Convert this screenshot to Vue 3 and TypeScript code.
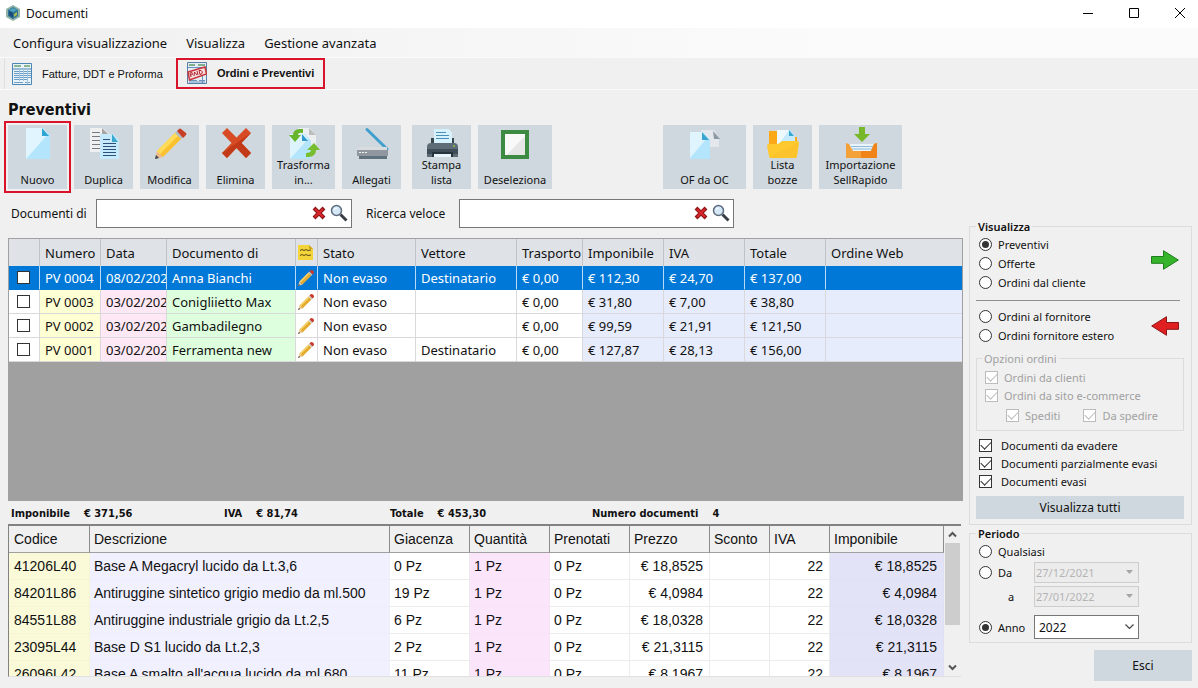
<script setup lang="ts">
import { ref } from 'vue'

type Action = { icon: string; label: string; size: string; marked?: boolean }

const groups: Action[][] = [
  [
    { icon: 'new', label: 'Nuovo', size: 'w-s', marked: true },
    { icon: 'copy', label: 'Duplica', size: 'w-s' },
    { icon: 'edit', label: 'Modifica', size: 'w-s' },
    { icon: 'delete', label: 'Elimina', size: 'w-s' },
    { icon: 'transform', label: 'Trasforma in...', size: 'w-m' },
    { icon: 'scan', label: 'Allegati', size: 'w-s' },
  ],
  [
    { icon: 'print', label: 'Stampa lista', size: 'w-s' },
    { icon: 'deselect', label: 'Deseleziona', size: 'w-l' },
  ],
  [
    { icon: 'convert', label: 'OF da OC', size: 'w-xl' },
    { icon: 'drafts', label: 'Lista bozze', size: 'w-s' },
    { icon: 'import', label: 'Importazione SellRapido', size: 'w-xl' },
  ],
]

const docCols = [31, 61, 66, 129, 22, 98, 101, 66, 81, 81, 81]
const docs = [
  { num: 'PV 0004', date: '08/02/2022', name: 'Anna Bianchi', carrier: 'Destinatario', net: '€ 112,30', vat: '€ 24,70', total: '€ 137,00' },
  { num: 'PV 0003', date: '03/02/2022', name: 'Conigliietto Max', carrier: '', net: '€ 31,80', vat: '€ 7,00', total: '€ 38,80' },
  { num: 'PV 0002', date: '03/02/2022', name: 'Gambadilegno', carrier: '', net: '€ 99,59', vat: '€ 21,91', total: '€ 121,50' },
  { num: 'PV 0001', date: '03/02/2022', name: 'Ferramenta new', carrier: 'Destinatario', net: '€ 127,87', vat: '€ 28,13', total: '€ 156,00' },
]

const itemCols = [81, 300, 80, 80, 80, 80, 60, 60]
const itemHeads = ['Codice', 'Descrizione', 'Giacenza', 'Quantità', 'Prenotati', 'Prezzo', 'Sconto', 'IVA', 'Imponibile']
const items = [
  ['41206L40', 'Base A Megacryl lucido da Lt.3,6', '0 Pz', '1 Pz', '0 Pz', '€ 18,8525', '', '22', '€ 18,8525'],
  ['84201L86', 'Antiruggine sintetico grigio medio da ml.500', '19 Pz', '1 Pz', '0 Pz', '€ 4,0984', '', '22', '€ 4,0984'],
  ['84551L88', 'Antiruggine industriale grigio da Lt.2,5', '6 Pz', '1 Pz', '0 Pz', '€ 18,0328', '', '22', '€ 18,0328'],
  ['23095L44', 'Base D S1 lucido da Lt.2,3', '2 Pz', '1 Pz', '0 Pz', '€ 21,3115', '', '22', '€ 21,3115'],
  ['26096L42', "Base A smalto all'acqua lucido da ml.680", '11 Pz', '1 Pz', '0 Pz', '€ 8,1967', '', '22', '€ 8,1967'],
]

const searches = [
  { id: 'customer', label: 'Documenti di', cls: 'search-a' },
  { id: 'quick', label: 'Ricerca veloce', cls: 'search-b' },
]
const query = ref<Record<string, string>>({ customer: '', quick: '' })
const totals = [
  ['Imponibile', '€ 371,56'],
  ['IVA', '€ 81,74'],
  ['Totale', '€ 453,30'],
  ['Numero documenti', '4'],
]
const selected = ref(0)
const view = ref('Preventivi')
const period = ref('Anno')
const states = ref(['Documenti da evadere', 'Documenti parzialmente evasi', 'Documenti evasi'])
</script>

<template>
  <div class="window">
    <header class="titlebar">
      <svg class="app-icon" viewBox="0 0 14 16">
        <path d="M7 0l7 4v8l-7 4-7-4V4z" fill="#8fb3a8" />
        <path d="M7 2l5 3v6l-5 3-5-3V5z" fill="#2f7396" />
        <path d="M3 5l4-2 4 2-4 2z" fill="#4fa3bf" />
        <path d="M3 6l4 2v5l-4-3z" fill="#1d4a78" />
        <path d="M8 9l3-2v3l-3 2z" fill="#a8b84a" />
      </svg>
      <span class="title">Documenti</span>
      <button class="win-btn" aria-label="Riduci"><svg viewBox="0 0 12 12"><path d="M1 6.500h10" /></svg></button>
      <button class="win-btn" aria-label="Ingrandisci"><svg viewBox="0 0 12 12"><path d="M1.500 1.500h9v9h-9z" /></svg></button>
      <button class="win-btn" aria-label="Chiudi"><svg viewBox="0 0 12 12"><path d="M1 1l10 10M11 1L1 11" /></svg></button>
    </header>

    <nav class="menubar">
      <button>Configura visualizzazione</button>
      <button>Visualizza</button>
      <button>Gestione avanzata</button>
    </nav>

    <nav class="tabs">
      <button class="tab">
        <svg class="tab-icon" viewBox="0 0 20 22">
          <path d="M.5.5h19v21H.5z" fill="#eaf3fa" stroke="#4b86b4" />
          <path d="M2 3h7M12 3h6" stroke="#6ba56b" stroke-width="1.500" />
          <path d="M1 6h18" stroke="#4b86b4" />
          <path d="M2 8.500h5M2 10.500h5M2 12.500h5M2 14.500h5M2 16.500h5M8 8.500h3M8 10.500h3M8 12.500h3M8 14.500h3M8 16.500h3M12 8.500h3M12 10.500h3M12 12.500h3M12 14.500h3M12 16.500h3M16 8.500h3M16 10.500h3M16 12.500h3M16 14.500h3M2 19.500h9M13 19.500h5" stroke="#6d9fc6" />
          <path d="M7.500 6v12M11.500 6v12M15.500 6v15" stroke="#a3c5df" />
        </svg>
        <span>Fatture, DDT e Proforma</span>
      </button>
      <button class="tab active">
        <svg class="tab-icon" viewBox="0 0 20 22">
          <path d="M.5.5h19v21H.5z" fill="#e4edf6" stroke="#5a7fa6" />
          <path d="M2 3h6M11 3h7" stroke="#5f9a66" stroke-width="1.500" />
          <path d="M1 5.500h18M2 18.500h8M12 18.500h6M15.500 14v7M2 20h16" stroke="#6d93bd" />
          <path d="M1 10l17-5 1.500 7-17 6z" fill="#f6dcdc" stroke="#c8353b" stroke-width="1.500" />
          <path d="M4 15l-1-4 2-.5.5 2-2 .5M7 14l.5-4 2.500 3M11 13l-1-4M13 12.500l-1-4 2 0 1.500 1.500-1 2z" fill="none" stroke="#b52930" stroke-width="1" />
        </svg>
        <span>Ordini e Preventivi</span>
      </button>
    </nav>

    <div class="body">
      <main class="main">
        <h1>Preventivi</h1>

        <div class="toolbar">
          <div v-for="(group, gi) in groups" :key="gi" class="tool-group">
            <button v-for="a in group" :key="a.icon" class="tool" :class="[a.size, { marked: a.marked }]">
              <svg class="tool-icon" viewBox="0 0 32 30">
                <g v-if="a.icon === 'new'">
                  <path d="M4 1h17l7 7v24H4z" fill="#b3e5fc" />
                  <path d="M4 1h17l5 6L4 32z" fill="#e1f5fe" />
                  <path d="M20 1l7 8h-7z" fill="#2fa5d2" />
                </g>
                <g v-else-if="a.icon === 'copy'">
                  <path d="M2 1h13l6 6v18H2z" fill="#f0f0f0" />
                  <path d="M14 1l6 6h-6z" fill="#a5a5a5" />
                  <path d="M4 5.500h8M4 9.500h8M4 13.500h8M4 17.500h8M4 21.500h8" stroke="#757b85" />
                  <path d="M12 7h13l6 6v19H12z" fill="#c4eafb" />
                  <path d="M24 7l6 8h-6z" fill="#3ba9cf" />
                  <path d="M15 12.500h7M15 16.500h13M15 19.500h13M15 22.500h13M15 25.500h13M15 28.500h13" stroke="#2b5079" />
                </g>
                <g v-else-if="a.icon === 'edit'">
                  <path d="M1 32l2-8 6 6z" fill="#efb98a" />
                  <path d="M1 32l1-4 3 3z" fill="#37474f" />
                  <path d="M3 24L22 5l6 6L9 30z" fill="#fbc02d" />
                  <path d="M3 24L22 5l3 3L6 27z" fill="#ffdb57" />
                  <path d="M21 6l2-2 6 6-2 2z" fill="#b0bec5" />
                  <path d="M23 4l2-2q1-1 2 0l5 4q1 1 0 2l-3 3z" fill="#c63e25" />
                </g>
                <g v-else-if="a.icon === 'delete'">
                  <path d="M7 1l9.500 9.500L26 1l5 5-9.500 10L31 26l-5 5-9.500-10L7 31l-5-5 9.500-10L2 6z" fill="#d84a23" />
                  <path d="M31 6l-9.500 10L31 26l-5 5-9.500-10L7 31l-5-5z" fill="#c23a17" />
                </g>
                <g v-else-if="a.icon === 'transform'">
                  <path d="M10 1h12l6 7v14H10z" fill="#eceff1" />
                  <path d="M21 1l7 7h-7z" fill="#bdbdbd" />
                  <path d="M2 7h15l6 7v18H2z" fill="#b3e5fc" />
                  <path d="M2 7h14l4 5L2 32z" fill="#def4fd" />
                  <path d="M14 7l6 7h-6z" fill="#3199ce" />
                  <path d="M15 2H11Q5 3 5 8H1l6 7 6-7H10Q10 5 15 6z" fill="#66b52d" />
                  <path d="M18 30h3q7-1 7-7h4l-6-7-7 7h4q0 3-5 3z" fill="#77bd2f" />
                </g>
                <g v-else-if="a.icon === 'scan'">
                  <path d="M11 2.500L31 22" stroke="#419fce" stroke-width="3" stroke-linecap="round" />
                  <path d="M3 20h28v3H1z" fill="#d8dcdf" />
                  <path d="M1 23h31v6H1z" fill="#90979e" />
                  <path d="M3 25.500h2M6 25.500h2M9 25.500h2" stroke="#f2f5f7" />
                  <path d="M3 29h28v3H3z" fill="#60727d" />
                </g>
                <g v-else-if="a.icon === 'print'">
                  <path d="M5 11h23v9H5z" fill="#37474f" />
                  <path d="M8 2h15l3 4v13H8z" fill="#d8f2fd" />
                  <path d="M10 5.500h10M10 8.500h13M10 11.500h13" stroke="#4a8fb8" />
                  <path d="M1 20q0-4 4-4h23q4 0 4 4v10H1z" fill="#5d6c76" />
                  <path d="M1 22h31v5H1z" fill="#3e4d57" />
                  <circle cx="28" cy="19" r="1" fill="#8bc34a" />
                  <path d="M6 25h21v5H6z" fill="#26343d" />
                  <path d="M8 27h17v3H8z" fill="#e8f5fc" />
                </g>
                <g v-else-if="a.icon === 'deselect'">
                  <path d="M4 5h24v25H4z" fill="#f8f8f8" />
                  <path d="M28 7v23H6z" fill="#e6e6e6" />
                  <path d="M4 5h24v25H4z" fill="none" stroke="#3d8b43" stroke-width="4" />
                </g>
                <g v-else-if="a.icon === 'convert'">
                  <path d="M12 3h13l5 8v9H12z" fill="#e4e8ec" />
                  <path d="M24 4l7 8h-6z" fill="#8c9aa3" />
                  <path d="M1 5h13l7 8v19H1z" fill="#b3e5fc" />
                  <path d="M1 5h13l4 6L1 31z" fill="#dff4fd" />
                  <path d="M13 5l7 8h-7z" fill="#39a5d0" />
                </g>
                <g v-else-if="a.icon === 'drafts'">
                  <path d="M2 4h8v6h20v16H2z" fill="#fba919" />
                  <path d="M10 3h13l5 6v16H10z" fill="#c5ebfc" />
                  <path d="M10 3h12L10 20z" fill="#edf9fe" />
                  <path d="M22 3l5 6h-5z" fill="#3aa7d1" />
                  <path d="M0 19q0-2 2-2h9l4-3h15q2 0 2 2l-2 13q0 2-2 2H4q-2 0-2-2z" fill="#fdc92e" />
                  <path d="M2 30L31 16l-1 13q0 2-2 2H4z" fill="#fbbd27" opacity=".5" />
                </g>
                <g v-else>
                  <path d="M14 0h6v7h5l-8 8-8-8h5z" fill="#76b82a" />
                  <path d="M5 17h24v7H5z" fill="#e9f3f9" />
                  <path d="M6 19.500h22M7 22h20" stroke="#8fbcd8" />
                  <path d="M1 16l3 1 4 7h18l3-7 3-1v15H1z" fill="#f5a13a" />
                  <path d="M16 24h10l3-7 3-1v15H16z" fill="#f08419" />
                </g>
              </svg>
              <span class="tool-label">{{ a.label }}</span>
            </button>
          </div>
        </div>

        <div class="search-row">
          <div v-for="s in searches" :key="s.id" class="search" :class="s.cls">
            <label :for="s.id">{{ s.label }}</label>
            <div class="search-box">
              <input :id="s.id" v-model="query[s.id]" type="text" />
              <button aria-label="Cancella" @click="query[s.id] = ''">
                <svg class="clear" viewBox="0 0 14 14">
                  <path d="M2 2l10 10M12 2L2 12" stroke="#8d1518" stroke-width="4" />
                  <path d="M3 3l8 8M11 3l-8 8" stroke="#d8262a" stroke-width="2" />
                </svg>
              </button>
              <button aria-label="Cerca">
                <svg class="lens" viewBox="0 0 18 18">
                  <path d="M10.500 10.500l6 6" stroke="#3a3f47" stroke-width="3" />
                  <circle cx="6.500" cy="6.500" r="5" fill="#d4e8f8" stroke="#5c6b7c" stroke-width="1.500" />
                  <path d="M4 6q0-2 3-2" fill="none" stroke="#fff" />
                </svg>
              </button>
            </div>
          </div>
        </div>

        <div class="doc-grid">
          <table>
            <colgroup>
              <col v-for="(w, i) in docCols" :key="i" :style="{ width: w + 'px' }" />
              <col />
            </colgroup>
            <thead>
              <tr>
                <th></th>
                <th>Numero</th>
                <th>Data</th>
                <th>Documento di</th>
                <th class="icon-cell">
                  <svg class="note" viewBox="0 0 15 15">
                    <path d="M0 0h11l4 4v11H0z" fill="#f3d53b" />
                    <path d="M11 0l4 4h-4z" fill="#c9a51d" />
                    <path d="M2 5.500l2-1 2 1 2-1 2 1 3-.5M2 10.500l2-1 2 1 2-1 2 1 3-.5" fill="none" stroke="#5d4c12" />
                  </svg>
                </th>
                <th>Stato</th>
                <th>Vettore</th>
                <th>Trasporto</th>
                <th>Imponibile</th>
                <th>IVA</th>
                <th>Totale</th>
                <th>Ordine Web</th>
              </tr>
            </thead>
            <tbody>
              <tr v-for="(d, i) in docs" :key="d.num" :class="{ selected: selected === i }" @click="selected = i">
                <td class="check-cell"><input type="checkbox" :aria-label="d.num" /></td>
                <td class="yellow">{{ d.num }}</td>
                <td class="pink">{{ d.date }}</td>
                <td class="green">{{ d.name }}</td>
                <td class="icon-cell">
                  <svg class="pencil" viewBox="0 0 16 16">
                    <path d="M0 16l1.500-4.500 3 3z" fill="#e8c9a0" />
                    <path d="M0 16l1-2 1 1z" fill="#333" />
                    <path d="M1.500 11.500l9-9 3 3-9 9z" fill="#e3ab2f" />
                    <path d="M1.500 11.500l9-9 1 1-9 9z" fill="#f8d873" />
                    <path d="M10.500 2.500l1-1 3 3-1 1z" fill="#c5ccd2" />
                    <path d="M11.500 1.500L13 0q3 0 3 3l-1.500 1.500z" fill="#c8392b" />
                  </svg>
                </td>
                <td>Non evaso</td>
                <td>{{ d.carrier }}</td>
                <td>€ 0,00</td>
                <td class="blue">{{ d.net }}</td>
                <td class="blue">{{ d.vat }}</td>
                <td class="blue">{{ d.total }}</td>
                <td class="blue"></td>
              </tr>
            </tbody>
          </table>
        </div>

        <dl class="totals">
          <div v-for="t in totals" :key="t[0]">
            <dt>{{ t[0] }}</dt>
            <dd>{{ t[1] }}</dd>
          </div>
        </dl>

        <div class="item-grid">
          <div class="item-view">
            <table>
              <colgroup>
                <col v-for="(w, i) in itemCols" :key="i" :style="{ width: w + 'px' }" />
                <col />
              </colgroup>
              <thead>
                <tr><th v-for="h in itemHeads" :key="h">{{ h }}</th></tr>
              </thead>
              <tbody>
                <tr v-for="row in items" :key="row[0]">
                  <td v-for="(c, i) in row" :key="i">{{ c }}</td>
                </tr>
              </tbody>
            </table>
          </div>
          <div class="scrollbar">
            <button aria-label="Su"><svg viewBox="0 0 9 7"><path d="M1 5.500L4.500 2 8 5.500" /></svg></button>
            <div class="track"><div class="thumb"></div></div>
            <button aria-label="Giù"><svg viewBox="0 0 9 7"><path d="M1 1.500L4.500 5 8 1.500" /></svg></button>
          </div>
        </div>
      </main>

      <aside class="side">
        <fieldset class="view-box">
          <legend>Visualizza</legend>
          <div class="split">
            <div class="choices">
              <label v-for="o in ['Preventivi', 'Offerte', 'Ordini dal cliente']" :key="o">
                <input v-model="view" type="radio" name="view" :value="o" />{{ o }}
              </label>
            </div>
            <svg class="arrow up" viewBox="0 0 28 20"><path d="M.5 6.500h12V.7L27.300 10 12.500 19.300v-6H.5z" fill="#36b52c" stroke="#1d7d1a" /></svg>
          </div>
          <hr />
          <div class="split">
            <div class="choices">
              <label v-for="o in ['Ordini al fornitore', 'Ordini fornitore estero']" :key="o">
                <input v-model="view" type="radio" name="view" :value="o" />{{ o }}
              </label>
            </div>
            <svg class="arrow" viewBox="0 0 28 20"><path d="M27.500 6.500h-12V.7L.7 10l14.800 9.300v-6h12z" fill="#e02020" stroke="#8c1515" /></svg>
          </div>
          <fieldset class="options" disabled>
            <legend>Opzioni ordini</legend>
            <label><input type="checkbox" checked />Ordini da clienti</label>
            <label><input type="checkbox" checked />Ordini da sito e-commerce</label>
            <div class="sub">
              <label><input type="checkbox" checked />Spediti</label>
              <label><input type="checkbox" checked />Da spedire</label>
            </div>
          </fieldset>
          <div class="states">
            <label v-for="o in ['Documenti da evadere', 'Documenti parzialmente evasi', 'Documenti evasi']" :key="o">
              <input v-model="states" type="checkbox" :value="o" />{{ o }}
            </label>
          </div>
          <button class="flat show-all">Visualizza tutti</button>
        </fieldset>

        <fieldset class="period-box">
          <legend>Periodo</legend>
          <div class="period-row first">
            <label><input v-model="period" type="radio" name="period" value="Qualsiasi" />Qualsiasi</label>
          </div>
          <div class="period-row">
            <label><input v-model="period" type="radio" name="period" value="Da" />Da</label>
            <div class="combo off">
              <select disabled aria-label="Da data"><option>27/12/2021</option></select>
              <svg viewBox="0 0 7 4"><path d="M0 0h7L3.500 4z" fill="#a5a5a5" /></svg>
            </div>
          </div>
          <div class="period-row">
            <label for="to-date" class="to">a</label>
            <div class="combo off">
              <select id="to-date" disabled><option>27/01/2022</option></select>
              <svg viewBox="0 0 7 4"><path d="M0 0h7L3.500 4z" fill="#a5a5a5" /></svg>
            </div>
          </div>
          <div class="period-row last">
            <label><input v-model="period" type="radio" name="period" value="Anno" />Anno</label>
            <div class="combo year">
              <select aria-label="Anno scelto"><option>2022</option></select>
              <svg viewBox="0 0 9 6"><path d="M.5.5l4 4 4-4" fill="none" stroke="#444" stroke-width="1.200" /></svg>
            </div>
          </div>
        </fieldset>

        <button class="flat exit">Esci</button>
      </aside>
    </div>
  </div>
</template>

<style>
body {
  background: #f0f0f0;
}
</style>

<style scoped>
* {
  box-sizing: border-box;
}
.window {
  display: flex;
  flex-direction: column;
  height: 100vh;
  min-height: 640px;
  font-family: "Noto Sans", "Open Sans", sans-serif;
  font-size: 11px;
  color: #111;
  background: #f0f0f0;
}
button,
input,
select {
  margin: 0;
  padding: 0;
  border: 0;
  font: inherit;
  color: inherit;
  background: none;
  appearance: none;
}
svg {
  display: block;
  flex: none;
}
.titlebar {
  display: flex;
  align-items: center;
  height: 28px;
  flex: none;
  padding: 0 0 2px 6px;
  font-size: 12px;
  background: #fff;
}
.app-icon {
  width: 14px;
  height: 16px;
}
.title {
  flex: 1;
  margin-left: 6px;
}
.win-btn {
  display: grid;
  align-items: center;
  justify-items: end;
  width: 46px;
  height: 26px;
  padding-right: 12px;
}
.win-btn svg {
  width: 12px;
  height: 12px;
  fill: none;
  stroke: #000;
}
.menubar {
  display: flex;
  align-items: center;
  gap: 19px;
  height: 30px;
  flex: none;
  padding-left: 13px;
  border-bottom: 1px solid #fafafa;
  font-size: 13px;
  background: linear-gradient(90deg, #f0f0f0, #fbfbfb 70%);
}
.tabs {
  display: flex;
  height: 32px;
  flex: none;
  padding-left: 4px;
  border-bottom: 1px solid #fafafa;
}
.tab {
  display: flex;
  align-items: center;
  gap: 10px;
  width: 172px;
  padding-left: 7px;
  border-left: 1px solid #dedede;
  font-family: "Liberation Sans", Arial, sans-serif;
  font-size: 11px;
  white-space: nowrap;
}
.tab-icon {
  width: 20px;
  height: 22px;
}
.tab.active {
  width: 149px;
  height: 31px;
  border: 2px solid #d9142a;
  padding: 0 0 2px 9px;
  font-weight: bold;
}
.body {
  display: flex;
  flex: 1;
  min-height: 0;
  gap: 6px;
  padding: 0 6px 7px 8px;
}
.main {
  display: flex;
  flex: 1;
  flex-direction: column;
  min-width: 0;
  padding-bottom: 4px;
}
h1 {
  margin: 0;
  padding-top: 9px;
  height: 35px;
  font-family: "DejaVu Sans Condensed", "DejaVu Sans", sans-serif;
  font-size: 16px;
  line-height: 22px;
}
.toolbar {
  display: flex;
  flex: none;
}
.tool-group {
  display: flex;
  gap: 7px;
}
.tool-group:nth-child(2) {
  margin-left: 11px;
}
.tool-group:nth-child(3) {
  margin-left: 111px;
}
.tool {
  display: flex;
  flex-direction: column;
  align-items: center;
  justify-content: space-between;
  height: 64px;
  padding: 2px 2px 2px;
  line-height: 15px;
  background: #cfd8de;
}
.w-s {
  width: 59px;
}
.w-m {
  width: 63px;
}
.w-l {
  width: 74px;
}
.w-xl {
  width: 83px;
}
.marked {
  outline: 2px solid #d9142a;
  outline-offset: 2px;
}
.tool-icon {
  width: 32px;
  height: 30px;
  overflow: visible;
}
.search-row {
  display: flex;
  flex: none;
  gap: 14px;
  margin: 10px 0;
  padding-left: 3px;
}
.search {
  display: flex;
  align-items: center;
  font-size: 12px;
}
.search-a label {
  width: 85px;
}
.search-b label {
  width: 93px;
}
.search-box {
  display: flex;
  align-items: center;
  gap: 4px;
  height: 29px;
  padding: 0 3px 2px 0;
  border: 1px solid #777;
  background: #fff;
}
.search-a .search-box {
  width: 256px;
}
.search-b .search-box {
  width: 275px;
}
.search-box input {
  flex: 1;
  min-width: 0;
  height: 100%;
  padding-left: 4px;
  outline: none;
}
.clear {
  width: 14px;
  height: 14px;
}
.lens {
  width: 18px;
  height: 18px;
}
table {
  width: 100%;
  border-collapse: separate;
  border-spacing: 0;
  table-layout: fixed;
}
th,
td {
  overflow: hidden;
  padding: 0 0 0 5px;
  font-weight: normal;
  text-align: left;
  white-space: nowrap;
}
.doc-grid {
  flex: 1;
  min-height: 0;
  border: 1px solid #a0a0a0;
  font-size: 13px;
  background: #a0a0a0;
}
.doc-grid th {
  height: 27px;
  border-right: 1px solid #bfc3c8;
  background: #dfe3e8;
}
.doc-grid td {
  height: 24px;
  border-right: 1px solid #d9d9dc;
  border-bottom: 1px solid #d9d9dc;
  line-height: 20px;
  background: #fff;
}
.doc-grid .yellow {
  background: #ffffd4;
}
.doc-grid .pink {
  background: #ffe8f5;
}
.doc-grid .green {
  background: #deffde;
}
.doc-grid .blue {
  background: #e6ecfc;
}
.doc-grid th:last-child,
.doc-grid td:last-child {
  border-right: 0;
}
.doc-grid .selected td {
  border-color: #b9d9f5;
  border-bottom-color: #0078d7;
  color: #fff;
  background: #0078d7;
}
.doc-grid .icon-cell {
  padding: 0 2px;
}
.doc-grid td.check-cell {
  padding-left: 8px;
}
input[type="checkbox"],
input[type="radio"] {
  display: grid;
  place-items: center;
  flex: none;
  width: 13px;
  height: 13px;
  border: 1px solid #333;
  background: #fff;
}
input[type="radio"] {
  border-radius: 50%;
}
input[type="radio"]:checked::after {
  content: "";
  width: 7px;
  height: 7px;
  border-radius: 50%;
  background: #333;
}
input[type="checkbox"]:checked::after {
  content: "";
  width: 9px;
  height: 5px;
  border-bottom: 1px solid #333;
  border-left: 1px solid #333;
  transform: translateY(-1px) rotate(-45deg);
}
input[type="checkbox"]:disabled,
input[type="checkbox"]:disabled:checked::after {
  border-color: #bcbcbc;
}
.note {
  width: 15px;
  height: 15px;
}
.pencil {
  width: 16px;
  height: 16px;
}
.totals {
  display: grid;
  grid-template-columns: 213px 166px 202px 1fr;
  align-items: center;
  flex: none;
  height: 23px;
  margin: 0;
  padding: 1px 0 0 3px;
  font-family: "DejaVu Sans Condensed", "DejaVu Sans", sans-serif;
  font-weight: bold;
}
.totals div {
  display: flex;
  gap: 14px;
}
.totals dd {
  margin: 0;
}
.item-grid {
  display: flex;
  flex: none;
  height: 153px;
  margin-right: 2px;
  border: 1px solid #828282;
  border-width: 2px 0 1px 1px;
  border-bottom-color: #e0e0e0;
  font-family: "Liberation Sans", Arial, sans-serif;
  font-size: 14px;
}
.item-view {
  flex: 1;
  overflow: hidden;
}
.item-grid th {
  height: 27px;
  border-right: 1px solid #8c8c8c;
  border-bottom: 1px solid #a0a0a0;
}
.item-grid td {
  height: 27px;
  border-right: 1px solid #ececec;
  border-bottom: 1px solid #ececec;
  background: #fff;
}
.item-grid th,
.item-grid td {
  padding-left: 4px;
}
.item-grid th:first-child,
.item-grid td:first-child {
  padding-left: 5px;
}
.item-grid td:nth-child(1) {
  border-color: #f6f6d6;
  background: #fafad8;
}
.item-grid td:nth-child(2) {
  border-color: #ededfc;
  background: #f0f0ff;
}
.item-grid td:nth-child(4) {
  border-color: #f8e2f8;
  background: #fbe5fb;
}
.item-grid td:nth-child(9) {
  border-color: #e0e0f4;
  background: #e3e3f8;
}
.item-grid td:nth-child(6),
.item-grid td:nth-child(8),
.item-grid td:nth-child(9) {
  padding-right: 6px;
  text-align: right;
}
.scrollbar {
  display: flex;
  flex-direction: column;
  width: 17px;
  padding: 0 1px;
}
.scrollbar button {
  display: grid;
  place-items: center;
  height: 17px;
}
.scrollbar svg {
  width: 9px;
  height: 7px;
  fill: none;
  stroke: #555;
  stroke-width: 2;
}
.track {
  flex: 1;
}
.thumb {
  height: 71%;
  background: #cdcdcd;
}
.side {
  width: 223px;
  flex: none;
  display: flex;
  flex-direction: column;
  padding-top: 128px;
}
fieldset {
  min-width: 0;
  margin: 0;
  padding: 0 7px 0 6px;
  border: 1px solid #dcdcdc;
}
legend {
  height: 17px;
  padding: 0 2px;
  line-height: 17px;
}
.view-box > legend,
.period-box > legend {
  font-weight: 600;
}
.view-box {
  padding-bottom: 5px;
}
.split {
  display: flex;
  align-items: center;
  justify-content: space-between;
  padding-right: 5px;
}
label {
  display: flex;
  align-items: center;
}
.choices label {
  height: 19px;
  gap: 6px;
  padding-left: 3px;
}
.arrow {
  width: 28px;
  height: 20px;
}
.arrow.up {
  margin-bottom: 8px;
}
hr {
  margin: 8px 4px 6px 0;
  border: 0;
  border-top: 1px solid #8f8f8f;
}
.options {
  margin: 5px 0 0;
  padding: 1px 0 6px 8px;
  color: #a0a0a0;
}
.options legend {
  margin-left: -3px;
}
.options label {
  height: 18px;
  gap: 6px;
}
.sub {
  display: flex;
  gap: 23px;
  padding: 2px 0 0 21px;
}
.states {
  padding: 5px 0 6px 3px;
}
.states label {
  height: 18px;
  gap: 9px;
}
.flat {
  background: #cfd8de;
}
.show-all {
  width: 100%;
  height: 23px;
  font-size: 12px;
}
.period-box {
  padding-bottom: 3px;
}
.period-row {
  display: flex;
  align-items: center;
  height: 24px;
}
.period-row.first {
  height: 18px;
}
.period-row.last {
  height: 31px;
  align-items: flex-end;
}
.period-row.last label {
  height: 24px;
}
.period-row label {
  gap: 6px;
  width: 58px;
  padding-left: 3px;
  white-space: nowrap;
}
.period-row .to {
  padding-left: 32px;
}
.combo {
  display: flex;
  align-items: center;
  width: 105px;
  height: 21px;
  padding-right: 5px;
  border: 1px solid #cdcdcd;
  background: #ececec;
}
.combo select {
  flex: 1;
  padding-left: 1px;
  opacity: 1;
}
.combo.off {
  color: #b4b4b4;
}
.combo.off svg {
  width: 7px;
  height: 4px;
}
.combo.year {
  height: 24px;
  padding-right: 4px;
  border-color: #777;
  background: #fff;
}
.combo.year select {
  padding-left: 4px;
  font-size: 12px;
}
.combo.year svg {
  width: 9px;
  height: 6px;
}
.exit {
  align-self: flex-end;
  width: 98px;
  height: 31px;
  margin-top: auto;
  font-size: 12px;
}
</style>
